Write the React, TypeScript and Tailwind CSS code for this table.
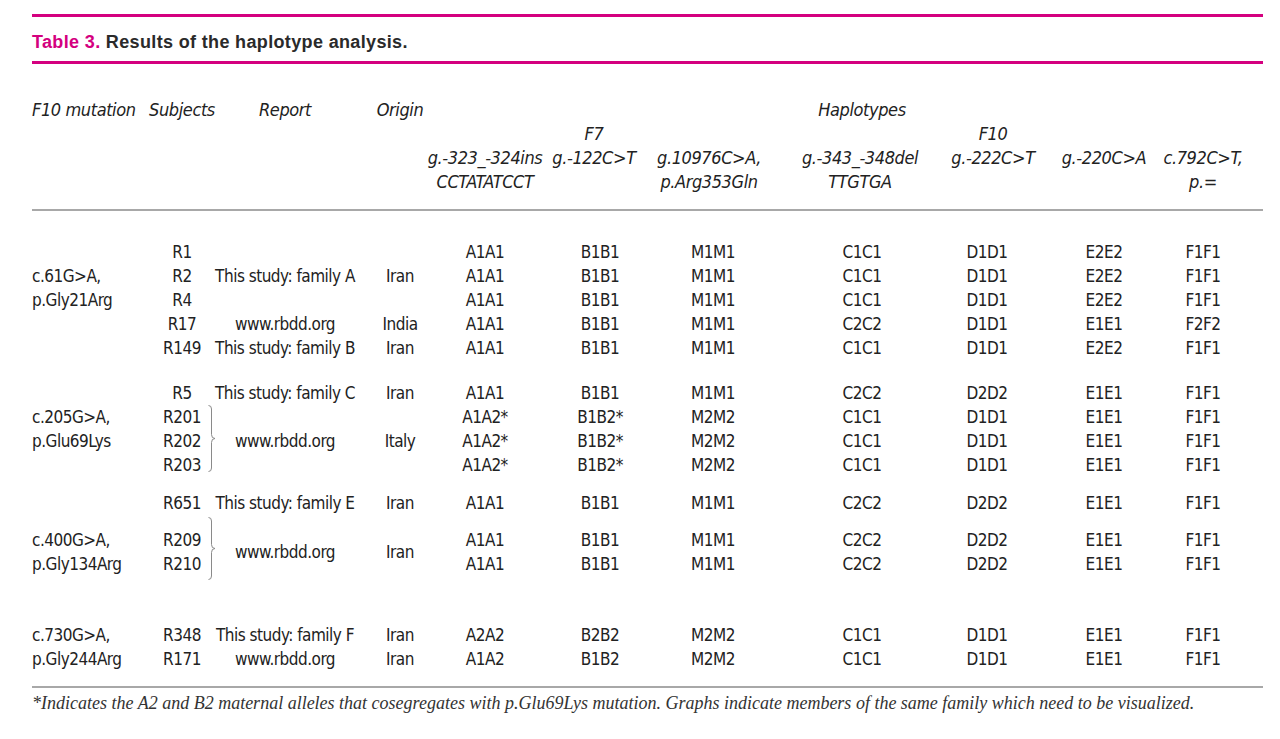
import React from "react";

type Cell = (string | null)[] | { center: string };

const COLS = [
  "w-[118px] items-start",
  "w-[64px] items-center",
  "w-[142px] items-center",
  "w-[88px] items-center",
  "w-[82px] items-center",
  "ml-[34px] w-[80px] items-center",
  "ml-[23px] w-[100px] items-center",
  "ml-[39px] w-[120px] items-center",
  "ml-[25px] w-[80px] items-center",
  "ml-[37px] w-[80px] items-center",
  "ml-[19px] w-[80px] items-center",
];

const HEAD_SHIFT = ["", "", "", "", "", "pr-[12px]", "pr-[8px]", "pr-[4px]", "pl-[12px]", "", ""];

const SANS = "font-['Liberation_Sans_Narrow','DejaVu_Sans_Condensed','Liberation_Sans',sans-serif]";

function Brace({ h, top }: { h: number; top: number }) {
  const m = h / 2;
  return (
    <svg
      width={8}
      height={h}
      viewBox={`0 0 8 ${h}`}
      className="absolute left-[58px]"
      style={{ top }}
    >
      <path
        d={`M0.5,0.5 Q3.5,0.5 3.5,4 L3.5,${m - 4} Q3.5,${m} 7,${m} Q3.5,${m} 3.5,${m + 4} L3.5,${h - 4} Q3.5,${h - 0.5} 0.5,${h - 0.5}`}
        fill="none"
        stroke="#8a8a8a"
        strokeWidth={1}
      />
    </svg>
  );
}

function Block({
  rows,
  cells,
  brace,
  head,
  className = "",
}: {
  rows: number;
  cells: Cell[];
  brace?: { h: number; top: number };
  head?: boolean;
  className?: string;
}) {
  return (
    <div className={`flex ${className}`}>
      {cells.map((cell, i) => (
        <div
          key={i}
          className={`relative flex shrink-0 flex-col ${COLS[i]} ${head ? HEAD_SHIFT[i] : ""} ${
            !Array.isArray(cell) ? "justify-center" : ""
          }`}
          style={{ height: rows * 24 }}
        >
          {Array.isArray(cell) ? (
            cell.map((t, j) => (
              <div key={j} className="h-6 whitespace-nowrap leading-6">
                {t ?? ""}
              </div>
            ))
          ) : (
            <div className="h-6 whitespace-nowrap leading-6">{cell.center}</div>
          )}
          {i === 1 && brace ? <Brace h={brace.h} top={brace.top} /> : null}
        </div>
      ))}
    </div>
  );
}

function rep(s: string, n: number) {
  return Array.from({ length: n }, () => s);
}

export default function App() {
  const headCells: Cell[] = [
    ["F10 mutation", null, null, null],
    ["Subjects", null, null, null],
    ["Report", null, null, null],
    ["Origin", null, null, null],
    [null, null, "g.-323_-324ins", "CCTATATCCT"],
    [null, "F7", "g.-122C>T", null],
    [null, null, "g.10976C>A,", "p.Arg353Gln"],
    [null, null, "g.-343_-348del", "TTGTGA"],
    [null, "F10", "g.-222C>T", null],
    [null, null, "g.-220C>A", null],
    [null, null, "c.792C>T,", "p.="],
  ];

  return (
    <div className="min-h-[739px] w-[1280px] bg-white pl-[32px] pt-[14px] text-[#231f20]">
      <div className="w-[1231px]">
        <div className="h-[3px] bg-[#d4007f]" />
        <div className="mt-[13px] h-6 whitespace-nowrap font-['Liberation_Sans',sans-serif] text-[18px] font-bold leading-6 tracking-[0.35px]">
          <span className="text-[#d4007f]">Table 3.</span>{" "}
          <span className="text-[#2a2a2a]">Results of the haplotype analysis.</span>
        </div>
        <div className="mt-[7px] h-[3px] bg-[#d4007f]" />

        <div className={`relative mt-[34px] ${SANS} text-[18px] italic tracking-[-0.4px] text-[#222]`}>
          <Block rows={4} cells={headCells} head />
          <div className="absolute left-[780px] top-0 w-[100px] text-center leading-6">
            Haplotypes
          </div>
        </div>

        <div className="mt-[15px] h-[2px] bg-[#a8a8a8]" />

        <div className={`${SANS} text-[17px] tracking-[-0.5px] text-[#222]`}>
          <Block
            className="mt-[29px]"
            rows={5}
            cells={[
              [null, "c.61G>A,", "p.Gly21Arg", null, null],
              ["R1", "R2", "R4", "R17", "R149"],
              [null, "This study: family A", null, "www.rbdd.org", "This study: family B"],
              [null, "Iran", null, "India", "Iran"],
              rep("A1A1", 5),
              rep("B1B1", 5),
              rep("M1M1", 5),
              ["C1C1", "C1C1", "C1C1", "C2C2", "C1C1"],
              rep("D1D1", 5),
              ["E2E2", "E2E2", "E2E2", "E1E1", "E2E2"],
              ["F1F1", "F1F1", "F1F1", "F2F2", "F1F1"],
            ]}
          />
          <Block
            className="mt-[21px]"
            rows={4}
            brace={{ h: 67, top: 24 }}
            cells={[
              [null, "c.205G>A,", "p.Glu69Lys", null],
              ["R5", "R201", "R202", "R203"],
              ["This study: family C", null, "www.rbdd.org", null],
              ["Iran", null, "Italy", null],
              ["A1A1", "A1A2*", "A1A2*", "A1A2*"],
              ["B1B1", "B1B2*", "B1B2*", "B1B2*"],
              ["M1M1", "M2M2", "M2M2", "M2M2"],
              ["C2C2", "C1C1", "C1C1", "C1C1"],
              ["D2D2", "D1D1", "D1D1", "D1D1"],
              rep("E1E1", 4),
              rep("F1F1", 4),
            ]}
          />
          <Block
            className="mt-[14px]"
            rows={1}
            cells={[
              [null],
              ["R651"],
              ["This study: family E"],
              ["Iran"],
              ["A1A1"],
              ["B1B1"],
              ["M1M1"],
              ["C2C2"],
              ["D2D2"],
              ["E1E1"],
              ["F1F1"],
            ]}
          />
          <Block
            className="mt-[13px]"
            rows={2}
            brace={{ h: 63, top: -11 }}
            cells={[
              ["c.400G>A,", "p.Gly134Arg"],
              ["R209", "R210"],
              { center: "www.rbdd.org" },
              { center: "Iran" },
              rep("A1A1", 2),
              rep("B1B1", 2),
              rep("M1M1", 2),
              rep("C2C2", 2),
              rep("D2D2", 2),
              rep("E1E1", 2),
              rep("F1F1", 2),
            ]}
          />
          <Block
            className="mt-[47px]"
            rows={2}
            cells={[
              ["c.730G>A,", "p.Gly244Arg"],
              ["R348", "R171"],
              ["This study: family F", "www.rbdd.org"],
              ["Iran", "Iran"],
              ["A2A2", "A1A2"],
              ["B2B2", "B1B2"],
              rep("M2M2", 2),
              rep("C1C1", 2),
              rep("D1D1", 2),
              rep("E1E1", 2),
              rep("F1F1", 2),
            ]}
          />
        </div>

        <div className="mt-[15px] h-[2px] bg-[#a8a8a8]" />
        <div className="mt-[5px] h-5 whitespace-nowrap font-['Liberation_Serif',serif] text-[18px] italic leading-5 text-[#333]">
          *Indicates the A2 and B2 maternal alleles that cosegregates with p.Glu69Lys mutation. Graphs indicate members of the same family which need to be visualized.
        </div>
      </div>
    </div>
  );
}
